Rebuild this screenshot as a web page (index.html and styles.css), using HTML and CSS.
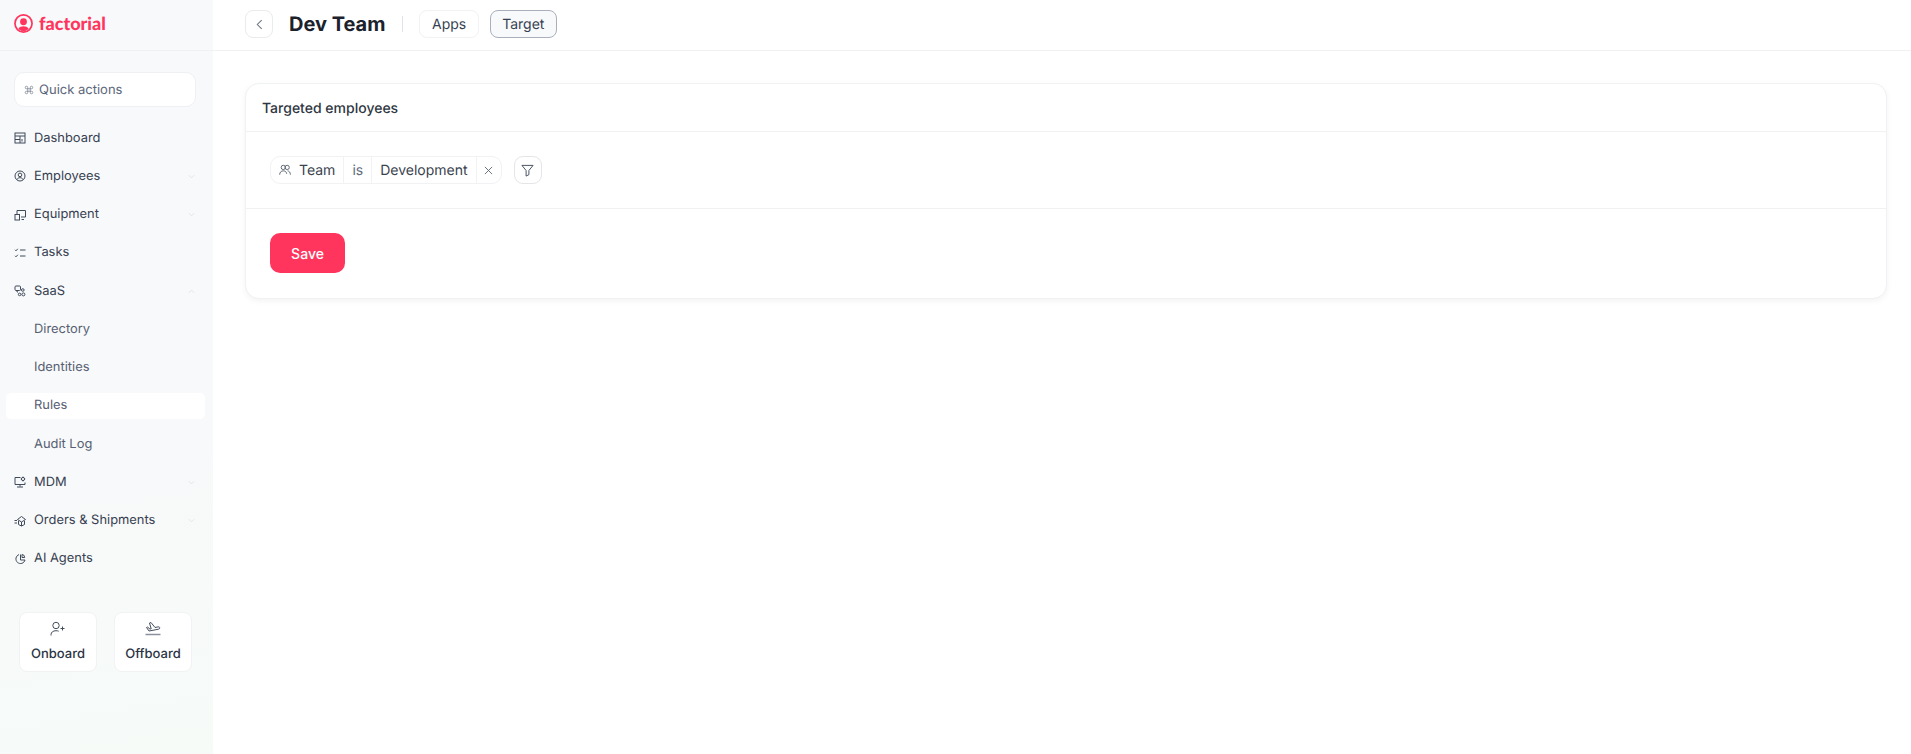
FILE: index.html
```html
<!DOCTYPE html>
<html lang="en">
  <head>
    <meta charset="UTF-8" />
    <meta name="viewport" content="width=device-width, initial-scale=1.0" />
    <title>Dev Team</title>
    <link rel="stylesheet" href="styles.css">
  </head>
  <body>
    <aside class="sidebar">
      <div class="brand">
        <svg class="brand-mark" viewBox="0 0 20 20">
          <circle class="brand-ring" cx="10" cy="10" r="9" />
          <circle class="brand-fill" cx="10" cy="8.2" r="3.6" />
          <path class="brand-fill" d="M4.6 15.6c1.2-1.9 3.1-2.6 5.4-2.6s4.2.7 5.4 2.6c-1.4 1.5-3.3 2.4-5.4 2.4s-4-.9-5.4-2.4z" />
        </svg>
        <span class="brand-name">factorial</span>
      </div>

      <div class="quick-actions">
        <svg class="quick-key" viewBox="0 0 24 24"><path d="M15 6v12a3 3 0 1 0 3-3H6a3 3 0 1 0 3 3V6a3 3 0 1 0-3 3h12a3 3 0 1 0-3-3" /></svg>
        <span>Quick actions</span>
      </div>

      <nav class="nav">
        <a class="nav-item" href="#">
          <svg class="nav-icon" viewBox="0 0 12 12"><rect x="1" y="1" width="10" height="10" /><path d="M1 4h10M6 4v7M1 7.5h5M8 7v2.5" /></svg>
          Dashboard
        </a>
        <a class="nav-item" href="#">
          <svg class="nav-icon" viewBox="0 0 12 12"><circle cx="6" cy="6" r="5" /><circle cx="6" cy="4.9" r="1.8" /><path d="M2.9 9.6c.6-1.3 1.7-1.9 3.1-1.9s2.5.6 3.1 1.9" /></svg>
          Employees
          <svg class="nav-chevron" viewBox="0 0 8 5"><path d="M1 1l3 3 3-3" /></svg>
        </a>
        <a class="nav-item" href="#">
          <svg class="nav-icon" viewBox="0 0 12 12"><path d="M3 5V1.5h8.5V8H7" /><rect x="1" y="5.5" width="4.5" height="5.5" /><path d="M7.5 10.5H10" /></svg>
          Equipment
          <svg class="nav-chevron" viewBox="0 0 8 5"><path d="M1 1l3 3 3-3" /></svg>
        </a>
        <a class="nav-item" href="#">
          <svg class="nav-icon" viewBox="0 0 12 12"><path d="M1 2.8l1 1 1.8-2M1 8.8l1 1 1.8-2M6 3h5.5M6 9h5.5" /></svg>
          Tasks
        </a>
        <a class="nav-item" href="#">
          <svg class="nav-icon" viewBox="0 0 12 12"><rect x="1" y="1" width="5.5" height="4.5" rx="1" /><path d="M3 5.5V7h1" /><circle cx="8.8" cy="5" r="1.3" /><circle cx="5.6" cy="9.4" r="1.3" /><circle cx="9.4" cy="9.4" r="1.5" /></svg>
          SaaS
          <svg class="nav-chevron" viewBox="0 0 8 5"><path d="M1 4l3-3 3 3" /></svg>
        </a>
        <a class="nav-item nav-sub" href="#">Directory</a>
        <a class="nav-item nav-sub" href="#">Identities</a>
        <a class="nav-item nav-sub is-active" href="#">Rules</a>
        <a class="nav-item nav-sub" href="#">Audit Log</a>
        <a class="nav-item" href="#">
          <svg class="nav-icon" viewBox="0 0 12 12"><path d="M6.5 1.5H1v7h10v-2M6 8.5v2M3 11h6" /><circle cx="9" cy="3" r="1.6" /><path d="M9 .6v.8M9 4.6v.8M6.8 3h.6M10.6 3h.6" /></svg>
          MDM
          <svg class="nav-chevron" viewBox="0 0 8 5"><path d="M1 1l3 3 3-3" /></svg>
        </a>
        <a class="nav-item" href="#">
          <svg class="nav-icon" viewBox="0 0 12 12"><path d="M3.5 4.5l4-3 4 3-4 2.5zM4.5 6v3.5l3 1.5 3-1.5V6M7.5 7v4M.5 5.5H3M.5 8H3" /></svg>
          Orders &amp; Shipments
          <svg class="nav-chevron" viewBox="0 0 8 5"><path d="M1 1l3 3 3-3" /></svg>
        </a>
        <a class="nav-item" href="#">
          <svg class="nav-icon" viewBox="0 0 12 12"><path d="M5 1.6a4.6 4.6 0 1 0 6 5.4H6.500V1.500" /><path d="M8 1.500a3 3 0 0 1 2.700 3H8z" /></svg>
          AI Agents
        </a>
      </nav>

      <div class="side-actions">
        <a class="side-action" href="#">
          <svg class="side-action-icon" viewBox="0 0 16 16"><circle cx="6" cy="4.5" r="3.2" /><path d="M1 14.5v-.8c0-2.500 2.200-4 5-4 1 0 1.900.2 2.700.5M12.500 5.500v4M10.500 7.500h4" /></svg>
          Onboard
        </a>
        <a class="side-action" href="#">
          <svg class="side-action-icon" viewBox="0 0 16 16"><path d="M1.500 6.500l1-.4 2.500 2 1.200-.3-1.700-5.800 1.500-.5 4 5 3-.6c1-.2 1.800.3 1.800 1s-.5 1.100-1.200 1.300L4 10z" /><path class="thick" d="M.5 13.500h15" /></svg>
          Offboard
        </a>
      </div>
    </aside>

    <div class="page">
      <header class="topbar">
        <button class="back-btn">
          <svg class="back-icon" viewBox="0 0 8 12"><path d="M6.500 1l-5 5 5 5" /></svg>
        </button>
        <h1 class="page-title">Dev Team</h1>
        <span class="topbar-sep"></span>
        <a class="tab" href="#">Apps</a>
        <a class="tab is-active" href="#">Target</a>
      </header>

      <main class="content">
        <section class="card">
          <div class="card-head">Targeted employees</div>
          <div class="card-filters">
            <div class="filter-pill">
              <span class="pill-part pill-field">
                <svg class="pill-icon" viewBox="0 0 14 14"><circle cx="5" cy="4" r="2.500" /><circle cx="9.500" cy="4" r="2.500" /><path d="M.8 12.500C.8 9.700 2.500 8 5 8s3.800 1.500 4 3.500M10 8c2 .2 3.300 1.900 3.300 4.500" /></svg>
                Team
              </span>
              <span class="pill-part pill-op">is</span>
              <span class="pill-part">Development</span>
              <span class="pill-part pill-close">
                <svg class="close-icon" viewBox="0 0 10 10"><path d="M1 1l8 8M9 1l-8 8" /></svg>
              </span>
            </div>
            <button class="filter-btn">
              <svg class="filter-icon" viewBox="0 0 14 14"><path d="M1 1.500h12L8.500 7v4.500l-3 1.500V7z" /></svg>
            </button>
          </div>
          <div class="card-foot">
            <button class="btn-save">Save</button>
          </div>
        </section>
      </main>
    </div>
  </body>
</html>
```

FILE: styles.css
```css
:root {
  --accent: #ff355e;
  --text-color: #1f2937;
  --line: #f0f1f3;
}

* {
  box-sizing: border-box;
}

body {
  margin: 0;
  display: flex;
  height: 754px;
  overflow: hidden;
  font-family: Inter, "Liberation Sans", sans-serif;
  text-rendering: geometricPrecision;
  color: var(--text-color);
  background-color: #ffffff;
}

a {
  color: inherit;
  text-decoration: none;
}

svg {
  fill: none;
  stroke: currentColor;
}

/* sidebar */
.sidebar {
  width: 213px;
  flex-shrink: 0;
  background: linear-gradient(170deg, #f8f9fb 0%, #f8f9fa 60%, #f6fbf8 100%);
}

.brand {
  height: 51px;
  display: flex;
  align-items: center;
  gap: 6px;
  padding: 0 0 3px 14px;
  border-bottom: 1px solid var(--line);
}

.brand-mark {
  width: 19px;
  height: 19px;
  stroke: none;
}

.brand-ring {
  stroke: var(--accent);
  stroke-width: 1.8;
}

.brand-fill {
  fill: var(--accent);
  stroke: none;
}

.brand-name {
  margin-bottom: 2px;
  color: var(--accent);
  font-family: Lato, sans-serif;
  font-size: 18px;
  font-weight: 900;
}

.quick-actions {
  display: flex;
  align-items: center;
  gap: 5px;
  height: 35px;
  margin: 21px 17px 0 14px;
  padding-left: 9px;
  background-color: #ffffff;
  border: 1px solid #eef0f3;
  border-radius: 10px;
  font-size: 13px;
  color: #5b6679;
}

.quick-key {
  width: 10px;
  height: 10px;
  stroke: #6b7585;
  stroke-width: 1.6;
}

.nav {
  display: flex;
  flex-direction: column;
  gap: 12.25px;
  margin-top: 18px;
  padding: 0 8px 0 6px;
}

.nav-item {
  display: flex;
  align-items: center;
  height: 26px;
  padding: 0 10px 0 8px;
  border-radius: 5px;
  font-size: 12.9px;
  color: #374151;
}

.nav-icon {
  width: 12px;
  height: 12px;
  margin-right: 8px;
  stroke: #3f4a5a;
  stroke-width: 1;
}

.nav-chevron {
  width: 7px;
  height: 5px;
  margin-left: auto;
  stroke: #dfe2e6;
  stroke-width: 1;
}

.nav-sub {
  padding-left: 28px;
  color: #566072;
}

.nav-sub.is-active {
  background-color: #ffffff;
}

.side-actions {
  display: flex;
  gap: 17px;
  margin: 40px 0 0 19px;
}

.side-action {
  width: 78px;
  height: 60px;
  display: flex;
  flex-direction: column;
  align-items: center;
  gap: 9px;
  padding-top: 8px;
  background-color: #ffffff;
  border: 1px solid #f1f2f4;
  border-radius: 8px;
  font-size: 13px;
  font-weight: 450;
  color: #2b3444;
}

.side-action-icon {
  width: 16px;
  height: 16px;
  stroke: #434d5c;
  stroke-width: 1;
}

.side-action-icon .thick {
  stroke-width: 1.5;
  stroke: #8a919c;
}

/* main column */
.page {
  flex: 1;
  min-width: 0;
}

.topbar {
  height: 51px;
  display: flex;
  align-items: center;
  padding: 0 0 2px 32px;
  border-bottom: 1px solid var(--line);
}

.back-btn {
  width: 28px;
  height: 28px;
  display: flex;
  align-items: center;
  justify-content: center;
  padding: 0;
  background-color: #ffffff;
  border: 1px solid #e9ebee;
  border-radius: 8px;
}

.back-icon {
  width: 7px;
  height: 11px;
  stroke: #6b7280;
  stroke-width: 1.2;
}

.page-title {
  margin: 0 0 0 16px;
  font-size: 20px;
  font-weight: 700;
  color: #1b222c;
}

.topbar-sep {
  width: 1px;
  height: 16px;
  margin: 0 16px 0 17px;
  background-color: #dfe2e6;
}

.tab {
  height: 28px;
  display: flex;
  align-items: center;
  padding: 0 11.5px;
  margin-right: 11px;
  border: 1px solid #f1f2f4;
  border-radius: 8px;
  font-size: 14px;
  color: #374151;
}

.tab.is-active {
  background-color: #f8f9fb;
  border-color: #a9afbb;
}

.content {
  padding: 32px 24px 0 32px;
}

.card {
  background-color: #ffffff;
  border: 1px solid var(--line);
  border-radius: 14px;
  box-shadow: 0 2px 6px rgba(0, 0, 0, 0.05);
}

.card-head {
  height: 48px;
  display: flex;
  align-items: center;
  padding: 1px 0 0 16px;
  font-size: 14px;
  font-weight: 450;
  color: #2f3742;
  border-bottom: 1px solid var(--line);
}

.card-filters {
  height: 77px;
  display: flex;
  align-items: center;
  gap: 12px;
  padding-left: 24px;
  border-bottom: 1px solid var(--line);
}

.filter-pill {
  height: 28px;
  display: flex;
  align-items: stretch;
  background-color: #ffffff;
  border: 1px solid #f1f2f4;
  border-radius: 10px;
  font-size: 14px;
  color: #3a424e;
}

.pill-part {
  display: flex;
  align-items: center;
  padding: 0 8px;
  border-left: 1px solid #f1f2f4;
}

.pill-part:first-child {
  border-left: 0;
}

.pill-op {
  color: #626c7a;
}

.pill-close {
  padding-left: 7px;
}

.pill-icon {
  width: 12px;
  height: 12px;
  margin-right: 8px;
  stroke: #4b5563;
  stroke-width: 1;
}

.close-icon {
  width: 9px;
  height: 9px;
  stroke: #5b6673;
  stroke-width: 1;
}

.filter-btn {
  width: 28px;
  height: 28px;
  display: flex;
  align-items: center;
  justify-content: center;
  padding: 0;
  background-color: #ffffff;
  border: 1px solid #e3e5e9;
  border-radius: 9px;
}

.filter-icon {
  width: 13px;
  height: 13px;
  stroke: #3f4a5a;
  stroke-width: 1;
}

.card-foot {
  height: 89px;
  padding: 24px;
}

.btn-save {
  width: 75px;
  height: 40px;
  background-color: var(--accent);
  color: #ffffff;
  border: none;
  border-radius: 10px;
  font-family: inherit;
  font-size: 14px;
  font-weight: 500;
}
```
